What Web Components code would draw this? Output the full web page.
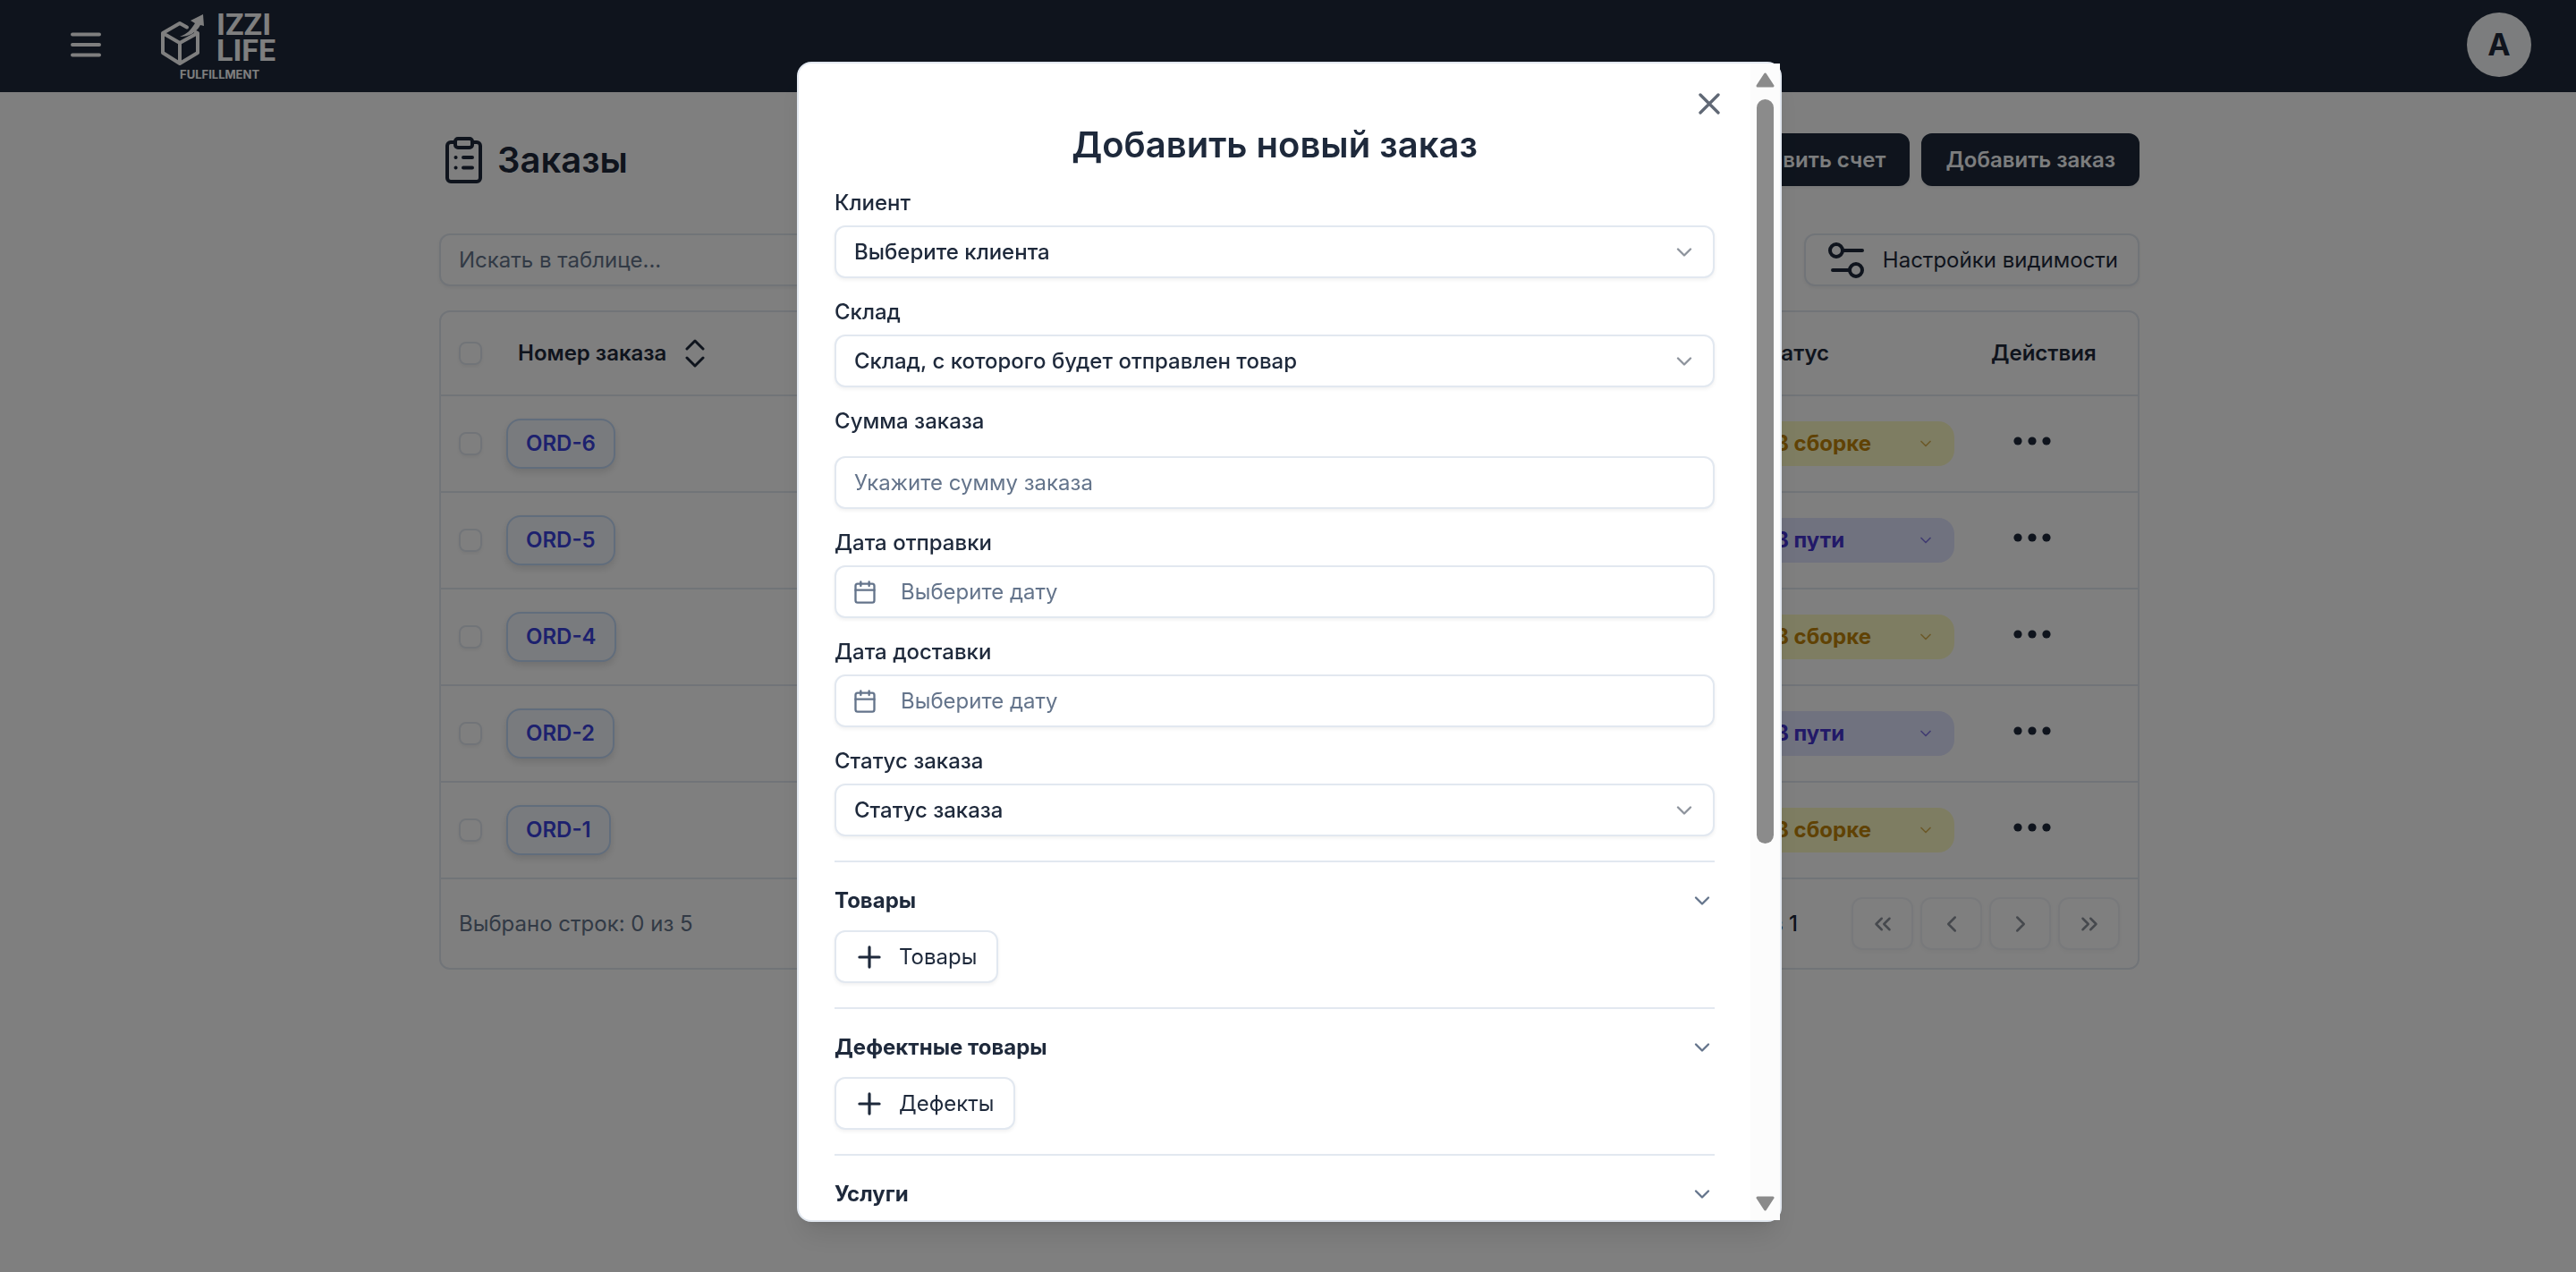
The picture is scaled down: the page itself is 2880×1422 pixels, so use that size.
<!DOCTYPE html>
<html lang="ru">
<head>
<meta charset="utf-8">
<title>Заказы</title>
<style>
  html, body { margin: 0; height: 100%; }
  body {
    --ink: #1e293b; --muted: #64748b; --line: #e2e8f0; --radius: 12px; --control: 59px;
    --shadow: 0 2px 4px rgba(0,0,0,.06);
    font: 400 24px/24px Inter, "Liberation Sans", sans-serif;
    color: var(--ink); background: #fff; overflow: hidden;
  }
</style>
</head>
<body>
<orders-app></orders-app>
<script>
const BASE = `*,*::before,*::after{box-sizing:border-box}
  button,input,select{font:inherit;color:inherit;letter-spacing:inherit;margin:0}
  button{cursor:pointer} svg{display:block;flex:none;fill:none;stroke:currentColor;stroke-linecap:round;stroke-linejoin:round}`;

function define(name, render) {
  customElements.define(name, class extends HTMLElement {
    constructor() { super(); this.attachShadow({ mode: 'open' }); }
    connectedCallback() { this.shadowRoot.innerHTML = `<style>${BASE}</style>` + render(this); }
  });
}
const attr = (el, n, d = '') => el.getAttribute(n) ?? d;

const ICONS = {
  chevron: ['0 0 24 24', 2, '<path d="m6 9 6 6 6-6"/>'],
  calendar: ['0 0 24 24', 2, '<rect x="3" y="4" width="18" height="18" rx="2"/><path d="M16 2v4M8 2v4M3 10h18"/>'],
  plus: ['0 0 24 24', 2, '<path d="M5 12h14M12 5v14"/>'],
  close: ['0 0 24 24', 2, '<path d="M18 6 6 18M6 6l12 12"/>'],
  menu: ['0 0 40 40', 4, '<path d="M5 8.500h30M5 20h30M5 31.500h30"/>'],
  clipboard: ['0 0 48 56', 4, '<rect x="13" y="4" width="19" height="10" rx="3"/><path d="M13 8H8a4 4 0 0 0-4 4v36a4 4 0 0 0 4 4h29a4 4 0 0 0 4-4V12a4 4 0 0 0-4-4h-5M13.500 25h.1M13.500 36.500h.1M22 25h10M22 36.500h10"/>'],
  sliders: ['-7 -7 54 54', 4, '<circle cx="9" cy="9" r="7"/><path d="M16 9h22M5 31h19"/><circle cx="31" cy="31" r="7"/>'],
  sort: ['0 0 32 32', 3, '<path d="m7 11 9-9 9 9M7 21l9 9 9-9"/>'],
  dots: ['0 0 44 12', 0, '<g fill="currentColor" stroke="none"><circle cx="6" cy="6" r="4.600"/><circle cx="22" cy="6" r="4.600"/><circle cx="38" cy="6" r="4.600"/></g>'],
  first: ['0 0 24 24', 2, '<path d="m11 17-5-5 5-5M18 17l-5-5 5-5"/>'],
  prev: ['0 0 24 24', 2, '<path d="m15 18-6-6 6-6"/>'],
  next: ['0 0 24 24', 2, '<path d="m9 18 6-6-6-6"/>'],
  last: ['0 0 24 24', 2, '<path d="m6 17 5-5-5-5M13 17l5-5-5-5"/>'],
};
const icon = (n, w, h = w) =>
  `<svg width="${w}" height="${h}" viewBox="${ICONS[n][0]}" stroke-width="${ICONS[n][1]}" aria-hidden="true">${ICONS[n][2]}</svg>`;

define('brand-logo', () => `
  <style>
    :host{display:block}
    a{display:grid;grid-template-columns:63px auto;color:#fff;text-decoration:none;line-height:1}
    svg{width:50px;height:64px}
    .name{font:700 34px/29px Roboto,sans-serif}
    .sub{grid-column:1/-1;padding-left:22px;font:700 13px/13px Inter,sans-serif}
  </style>
  <a href="#"><svg viewBox="0 0 50 64" stroke-width="4"><path d="M30 17.500 22 13 3 24v22l19 12 20-12V24l-2-1M3 24l19 11 18-10M22 35v22"/>
    <path d="M22 28c8-3 12-7 17-15l-5-3L48 3l1 13-4-1c-5 9-13 13-23 13Z" fill="currentColor" stroke="none"/></svg>
    <span class="name">IZZI<br>LIFE</span><span class="sub">FULFILLMENT</span></a>`);

define('app-header', () => `
  <style>
    :host{display:block;background:var(--ink);color:#fff}
    header{display:flex;align-items:center;height:103px;padding:0 50px 3px 76px}
    .menu{border:0;background:none;padding:0;margin-right:63px}
    brand-logo{flex:1;padding-top:3px}
    .avatar{width:72px;height:72px;border:0;border-radius:50%;background:#f8fafc;color:var(--ink);font-size:34px;font-weight:700}
  </style>
  <header><button class="menu" aria-label="Меню">${icon('menu', 40)}</button><brand-logo></brand-logo>
  <button class="avatar">A</button></header>`);

define('ui-button', el => `
  <style>
    :host{display:block}
    button{display:flex;align-items:center;justify-content:center;height:var(--control);border-radius:var(--radius);
      border:2px solid var(--line);background:#fff;box-shadow:var(--shadow);padding:0 20px;white-space:nowrap}
    .icon{gap:14px;padding:0 22px 0 18px}
    .primary{background:var(--ink);border-color:var(--ink);color:#f8fafc;font-weight:600;padding:0 25px}
    .square{width:69px;padding:0;opacity:.5}
  </style>
  <button class="${attr(el, 'variant')} ${el.hasAttribute('icon') ? 'icon' : ''}" ${el.hasAttribute('label') ? `aria-label="${attr(el, 'label')}"` : ''}>
  ${el.hasAttribute('icon') ? icon(attr(el, 'icon'), +attr(el, 'size', 38)) : ''}${el.hasAttribute('label') ? '' : '<slot></slot>'}</button>`);

define('order-badge', () => `
  <style>
    :host{display:inline-block}
    a{display:flex;align-items:center;height:56px;padding:0 20px;border:2px solid #c3daf8;border-radius:16px;background:#f3f6fc;
      color:#3b42dc;font-weight:600;text-decoration:none;box-shadow:0 4px 8px rgba(0,0,0,.12)}
  </style><a href="#"><slot></slot></a>`);

define('status-select', el => `
  <style>
    :host{display:grid;width:223px;color:#c08408;--fill:#fdfac4}
    :host([value="В пути"]){color:#4432d0;--fill:#e0e4fe}
    select,svg{grid-area:1/1}
    select{appearance:none;height:50px;border:0;border-radius:18px;background:var(--fill);padding:0 22px;font-weight:700}
    svg{place-self:center end;margin-right:22px;opacity:.6;pointer-events:none}
  </style>
  <select aria-label="Статус"><option>${attr(el, 'value')}</option></select>${icon('chevron', 20)}`);

define('orders-table', () => {
  const rows = [[6, 'В сборке'], [5, 'В пути'], [4, 'В сборке'], [2, 'В пути'], [1, 'В сборке']];
  const box = label => `<input type="checkbox" aria-label="${label}">`;
  return `<style>
    :host{display:block;border:2px solid var(--line);border-radius:var(--radius)}
    table{width:100%;table-layout:fixed;border-spacing:0}
    th,td{height:108px;padding:0 0 0 20px;text-align:left;vertical-align:middle;border-bottom:2px solid var(--line)}
    th{height:94px;font-weight:600}
    .pick{width:53px}.status{width:264px}.actions{width:184px}
    .sort,.more{display:flex;align-items:center;border:0;background:none;font-weight:600}
    .sort{gap:16px;padding:0 13px}
    .more{justify-content:center;width:92px;padding:0 0 6px}
    input{display:block;appearance:none;width:26px;height:26px;border:2px solid var(--line);border-radius:8px;box-shadow:var(--shadow)}
    footer{display:flex;align-items:center;padding:20px;gap:8px}
    .picked{flex:1;color:var(--muted)}
    .page{margin-right:52px;font-weight:500}
  </style>
  <table><thead><tr><th class="pick">${box('Выбрать все')}</th>
    <th><button class="sort">Номер заказа ${icon('sort', 32)}</button></th><th class="status">Статус</th><th class="actions">Действия</th></tr></thead>
  <tbody>${rows.map(([n, s]) => `<tr><td>${box('Выбрать ORD-' + n)}</td><td><order-badge>ORD-${n}</order-badge></td>
    <td><status-select value="${s}"></status-select></td><td><button class="more" aria-label="Действия">${icon('dots', 44, 12)}</button></td></tr>`).join('')}</tbody></table>
  <footer><span class="picked">Выбрано строк: 0 из 5</span><span class="page">Страница 1 из 1</span>
    <ui-button variant="square" icon="first" size="30" label="В начало"></ui-button><ui-button variant="square" icon="prev" size="30" label="Назад"></ui-button>
    <ui-button variant="square" icon="next" size="30" label="Вперёд"></ui-button><ui-button variant="square" icon="last" size="30" label="В конец"></ui-button></footer>`;
});

define('orders-page', () => `
  <style>
    :host{display:block;padding:46px 0 0 3px}
    main{max-width:1901px;margin:0 auto}
    .head,.tools{display:flex;align-items:center;gap:13px}
    h1{flex:1;display:flex;align-items:center;gap:12px;margin:0;padding-left:5px;font-size:40px;line-height:56px;font-weight:600}
    .tools{justify-content:space-between;margin:53px 0 27px}
    .search{width:600px;height:var(--control);border:2px solid var(--line);border-radius:var(--radius);padding:0 20px;background:#fff;box-shadow:var(--shadow)}
    .search::placeholder{color:var(--muted);opacity:1}
  </style>
  <main>
    <div class="head"><h1>${icon('clipboard', 48, 56)}Заказы</h1><ui-button variant="primary">Добавить счет</ui-button><ui-button variant="primary">Добавить заказ</ui-button></div>
    <div class="tools"><input class="search" type="search" aria-label="Поиск" placeholder="Искать в таблице..."><ui-button icon="sliders" size="54">Настройки видимости</ui-button></div>
    <orders-table></orders-table>
  </main>`);

define('form-field', el => {
  const kind = attr(el, 'kind'), text = attr(el, 'text');
  const control = {
    select: `<select id="c"><option>${text}</option></select>${icon('chevron', 28)}`,
    input: `<input id="c" type="text" placeholder="${text}">`,
    date: `<button id="c" type="button">${icon('calendar', 28)}${text}</button>`,
  }[kind];
  return `<style>
    :host{display:grid;gap:13px} :host([kind=input]){gap:27px}
    label{font-weight:500}
    .wrap{display:grid}
    .wrap>*{grid-area:1/1}
    .wrap>svg{place-self:center end;margin-right:20px;opacity:.5;pointer-events:none}
    #c{appearance:none;width:100%;height:var(--control);border:2px solid var(--line);border-radius:var(--radius);
      background:#fff;box-shadow:var(--shadow);padding:0 20px;text-align:left}
    select#c{font-weight:500}
    button#c{display:flex;align-items:center;gap:26px;padding:0 18px;color:var(--muted)}
    #c::placeholder{color:var(--muted);opacity:1}
  </style><label for="c">${attr(el, 'label')}</label><div class="wrap">${control}</div>`;
});

define('form-section', el => `
  <style>
    :host{display:block;border-top:2px solid var(--line);padding-bottom:27px}
    h3{margin:0;font-size:24px;line-height:24px}
    h3 button{display:flex;justify-content:space-between;align-items:center;width:100%;height:76px;padding:10px 0 0;border:0;background:none;font-weight:700}
    svg{color:var(--muted)}
    .body{display:flex}
  </style>
  <h3><button type="button" aria-expanded="true">${attr(el, 'label')}${icon('chevron', 28)}</button></h3><div class="body"><slot></slot></div>`);

define('scroll-rail', () => `
  <style>
    :host{display:flex;flex-direction:column;align-items:center;width:33px;background:#fcfcfc;color:#8b8b8b;padding:10px 0}
    svg{fill:currentColor;stroke-width:3}
    .track{flex:1;display:flex;flex-direction:column;padding:13px 0;width:19px}
    .thumb{flex:24;border-radius:10px;background:currentColor}
    .rest{flex:11}
  </style>
  <svg width="21" height="17" viewBox="0 0 21 17"><path d="M10.500 2 19 15H2Z"/></svg>
  <div class="track"><div class="thumb"></div><div class="rest"></div></div>
  <svg width="21" height="17" viewBox="0 0 21 17"><path d="M10.500 15 19 2H2Z"/></svg>`);

define('order-dialog', () => `
  <style>
    :host{position:fixed;inset:0;display:flex;justify-content:center;padding:69px 0 56px 3px;background:rgba(0,0,0,.5)}
    .card{display:flex;width:1101px;max-width:100%;border:2px solid var(--line);border-radius:16px;background:#fff;
      box-shadow:0 20px 30px -6px rgba(0,0,0,.1),0 8px 12px -8px rgba(0,0,0,.1)}
    .view{flex:1;overflow:hidden;padding:25px 40px 0;border-radius:14px}
    .top{display:flex;justify-content:flex-end;height:42px;margin-right:-14px}
    .close{height:40px;border:0;background:none;padding:0;opacity:.7}
    h2{margin:0 0 29px;text-align:center;font-size:40px;line-height:48px;font-weight:600}
    form{display:grid;gap:26px;margin-bottom:27px}
  </style>
  <section class="card" role="dialog" aria-modal="true" aria-labelledby="t">
    <div class="view">
      <div class="top"><button class="close" aria-label="Закрыть">${icon('close', 40)}</button></div>
      <h2 id="t">Добавить новый заказ</h2>
      <form>
        <form-field kind="select" label="Клиент" text="Выберите клиента"></form-field>
        <form-field kind="select" label="Склад" text="Склад, с которого будет отправлен товар"></form-field>
        <form-field kind="input" label="Сумма заказа" text="Укажите сумму заказа"></form-field>
        <form-field kind="date" label="Дата отправки" text="Выберите дату"></form-field>
        <form-field kind="date" label="Дата доставки" text="Выберите дату"></form-field>
        <form-field kind="select" label="Статус заказа" text="Статус заказа"></form-field>
      </form>
      <form-section label="Товары"><ui-button icon="plus">Товары</ui-button></form-section>
      <form-section label="Дефектные товары"><ui-button icon="plus">Дефекты</ui-button></form-section>
      <form-section label="Услуги"></form-section>
    </div>
    <scroll-rail></scroll-rail>
  </section>`);

define('orders-app', () => `
  <style>:host{display:block;min-height:100vh}</style>
  <app-header></app-header><orders-page></orders-page><order-dialog></order-dialog>`);
</script>
</body>
</html>
